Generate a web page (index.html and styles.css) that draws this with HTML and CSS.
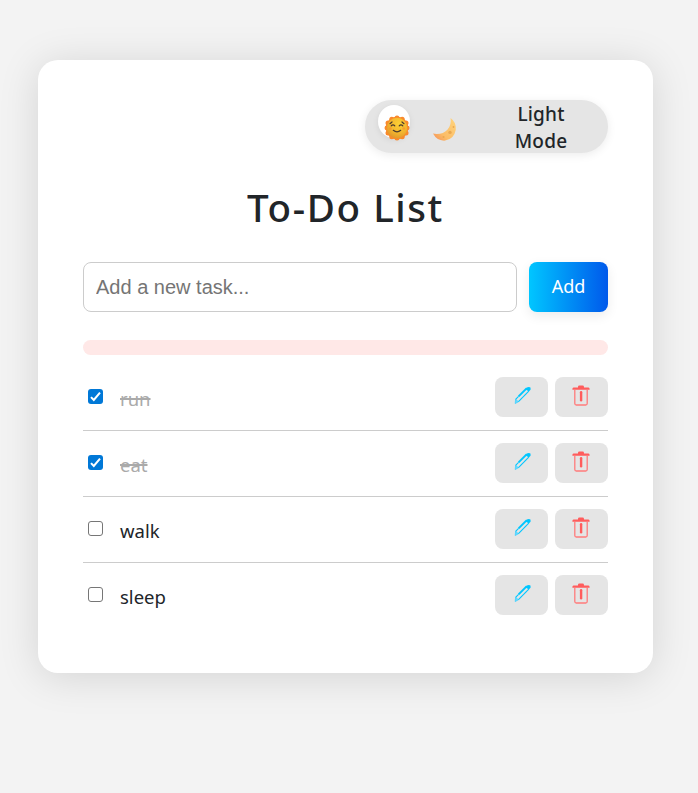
FILE: index.html
```html
<!DOCTYPE html>
<html lang="en">
<head>
<meta charset="utf-8">
<title>To-Do List</title>
<link rel="stylesheet" href="styles.css">
</head>
<body>
<svg class="defs" aria-hidden="true">
  <symbol id="pencil" viewBox="0 0 18 20">
    <path d="M12.6 1.4Q15.4.2 16.6 1.8 17.4 3.8 14.8 5.6L11.4 3.2Z" fill="#00c6ff"/>
    <path d="M12.6 2.4 4.6 10.4" stroke="#00c6ff" stroke-width="2"/>
    <path d="M4.6 10.4 1.6 13.4" stroke="#00c6ff" stroke-width="1.2"/>
    <path d="M14.8 5.2 4.2 15.8" fill="none" stroke="#00c6ff" stroke-width="1.1"/>
    <path d="M1.6 13 1.2 17.6 4.3 15.8Z" fill="#66d9ff" stroke="#36cfff" stroke-width=".7"/>
  </symbol>
  <symbol id="trash" viewBox="0 0 18 22">
    <path d="M6 2.5V2Q6 .6 7.4.6H10.6Q12 .6 12 2V2.5H16.5Q17.6 2.5 17.6 4V4.8H.4V4Q.4 2.5 1.5 2.5Z" fill="#ff5c5c"/>
    <path d="M2.8 4.8V18.5Q2.8 20 4.3 20H13.7Q15.2 20 15.2 18.5V4.8" fill="none" stroke="#ff7b7b" stroke-width="1.3"/>
    <path d="M9.1 7.3V15.2" stroke="#ff5c5c" stroke-width="2.4" stroke-linecap="round"/>
  </symbol>
</svg>
<main class="card">
  <div class="toggle">
    <span class="icons">
      <span class="knob"></span>
      <svg class="sun" viewBox="0 0 26 26">
        <defs><radialGradient id="sg" cx=".6" cy=".3" r=".75"><stop offset="0" stop-color="#fcd034"/><stop offset=".6" stop-color="#f2b52f"/><stop offset="1" stop-color="#e0942a"/></radialGradient></defs>
        <g fill="#f98a2c"><circle cx="13" cy="13" r="11.2"/><circle cx="13" cy="3" r="2.5"/><circle cx="18.2" cy="4.3" r="2.5"/><circle cx="22" cy="8" r="2.5"/><circle cx="23.1" cy="13" r="2.4"/><circle cx="22" cy="18" r="2.5"/><circle cx="18.2" cy="21.8" r="2.5"/><circle cx="13" cy="23" r="2.5"/><circle cx="7.8" cy="21.8" r="2.5"/><circle cx="4" cy="18" r="2.5"/><circle cx="2.9" cy="13" r="2.4"/><circle cx="4" cy="8" r="2.5"/><circle cx="7.8" cy="4.3" r="2.5"/></g>
        <circle cx="13" cy="13" r="10.3" fill="url(#sg)"/>
        <path d="M7.2 10.9Q9 8.8 10.8 10.9M15.2 10.9Q17 8.8 18.8 10.9M9.3 15.3Q13 18.3 16.7 15.3M6 8.7 8 7M18 7 20 8.7" fill="none" stroke="#4b3b2e" stroke-width="1.2" stroke-linecap="round"/>
        <g fill="#fb8b2c" opacity=".6"><circle cx="6.3" cy="13.5" r="1.3"/><circle cx="19.7" cy="13.5" r="1.3"/></g>
      </svg>
      <svg class="moon" viewBox="0 0 25 25">
        <defs><linearGradient id="mg" x1="0" y1="1" x2="1" y2="0"><stop offset="0" stop-color="#f58b55"/><stop offset=".35" stop-color="#fbbd68"/><stop offset="1" stop-color="#ffd47c"/></linearGradient></defs>
        <path d="M18.6 1Q24.6 5.5 23.8 12.8 22 22.3 13.2 23.6 5 24.2 1 16.6 10.5 18 15.4 12.7 19.7 8 18.6 1Z" fill="url(#mg)"/>
        <g fill="#eaa850"><circle cx="18" cy="15.4" r="1.7"/><circle cx="21.5" cy="10" r=".9"/><circle cx="11.5" cy="20" r="1.1"/></g>
      </svg>
    </span>
    <span class="mode">Light Mode</span>
  </div>
  <h1>To-Do List</h1>
  <form class="entry">
    <input class="task-input" type="text" placeholder="Add a new task...">
    <button class="add" type="button">Add</button>
  </form>
  <div class="bar"></div>
  <ul class="tasks">
    <li class="done"><input type="checkbox" checked><span class="label">run</span><button type="button" aria-label="Edit"><svg class="pencil"><use href="#pencil"/></svg></button><button type="button" aria-label="Delete"><svg class="trash"><use href="#trash"/></svg></button></li>
    <li class="done"><input type="checkbox" checked><span class="label">eat</span><button type="button" aria-label="Edit"><svg class="pencil"><use href="#pencil"/></svg></button><button type="button" aria-label="Delete"><svg class="trash"><use href="#trash"/></svg></button></li>
    <li><input type="checkbox"><span class="label">walk</span><button type="button" aria-label="Edit"><svg class="pencil"><use href="#pencil"/></svg></button><button type="button" aria-label="Delete"><svg class="trash"><use href="#trash"/></svg></button></li>
    <li><input type="checkbox"><span class="label">sleep</span><button type="button" aria-label="Edit"><svg class="pencil"><use href="#pencil"/></svg></button><button type="button" aria-label="Delete"><svg class="trash"><use href="#trash"/></svg></button></li>
  </ul>
</main>
</body>
</html>
```

FILE: styles.css
```css
* { box-sizing: border-box; }
body {
  margin: 0;
  padding: 60px 45px 0 38px;
  height: 793px;
  background: #f3f3f3;
  color: #212529;
  font-family: "Noto Sans", sans-serif;
}
.defs { display: none; }
.card {
  height: 613px;
  padding: 40px 45px;
  border-radius: 20px;
  background: #fff;
  box-shadow: 0 4px 40px rgba(0, 0, 0, .13);
}
.toggle {
  display: flex;
  justify-content: space-between;
  width: 243px;
  height: 53px;
  margin-left: auto;
  padding-right: 36px;
  border-radius: 27px;
  background: #e5e5e5;
  box-shadow: 0 2px 10px rgba(0, 0, 0, .08);
}
.icons {
  position: relative;
  display: flex;
  gap: 22px;
  padding: 15px 0 0 19px;
}
.knob {
  position: absolute;
  left: 13px;
  top: 5px;
  width: 32px;
  height: 33px;
  border-radius: 50%;
  background: #fff;
  box-shadow: 0 2px 6px rgba(0, 0, 0, .08);
}
.sun { position: relative; width: 26px; height: 26px; }
.moon { width: 25px; height: 25px; margin-top: 2px; }
.mode {
  width: 62px;
  padding-top: 1px;
  font-size: 19px;
  font-weight: 500;
  line-height: 27px;
  letter-spacing: .2px;
  text-align: center;
}
h1 {
  margin: 29px 0 0;
  font-size: 38.5px;
  font-weight: 500;
  line-height: 50px;
  letter-spacing: 1.6px;
  text-align: center;
}
.entry { display: flex; gap: 12px; margin-top: 30px; }
.task-input {
  width: 434px;
  height: 50px;
  padding: 0 12px;
  border: 1px solid #ccc;
  border-radius: 8px;
  font: 20px "Liberation Sans", sans-serif;
}
.task-input::placeholder { color: #757575; }
.add {
  width: 79px;
  height: 50px;
  padding: 0 0 2px;
  border: 0;
  border-radius: 8px;
  background: linear-gradient(90deg, #00c6ff, #0059eb);
  box-shadow: 0 4px 12px rgba(0, 0, 0, .08);
  color: #fff;
  font: 18px "Noto Sans", sans-serif;
}
.bar { height: 15px; margin-top: 28px; border-radius: 8px; background: #ffe8e7; }
.tasks { margin: 9.5px 0 0; padding: 0; list-style: none; }
.tasks li {
  display: flex;
  align-items: flex-start;
  height: 66px;
  padding-top: 12.5px;
  border-bottom: 1px solid #ccc;
}
.tasks li:last-child { border: 0; }
.tasks input {
  appearance: none;
  width: 15px;
  height: 15px;
  margin: 12px 17px 0 5px;
  border: 1px solid #767676;
  border-radius: 3px;
  background: #fff;
}
.tasks input:checked {
  border: 0;
  background: #0078d7 url("data:image/svg+xml,%3Csvg xmlns='http://www.w3.org/2000/svg' viewBox='0 0 15 15'%3E%3Cpath d='M3 8.1 5.8 11 12 3.6' fill='none' stroke='white' stroke-width='2'/%3E%3C/svg%3E");
}
.label { flex: 1; margin-top: 8px; font-size: 18.5px; line-height: 27px; }
.done .label { color: #aaa; text-decoration: line-through; text-decoration-thickness: 2px; }
.tasks button {
  width: 53px;
  height: 40px;
  margin-left: 7px;
  padding: 0;
  border: 0;
  border-radius: 8px;
  background: #e5e5e5;
}
.tasks svg { display: block; }
.pencil { width: 18px; height: 20px; margin: -2px 0 0 19px; }
.trash { width: 18px; height: 22px; margin: -2px 0 0 17px; }
```
